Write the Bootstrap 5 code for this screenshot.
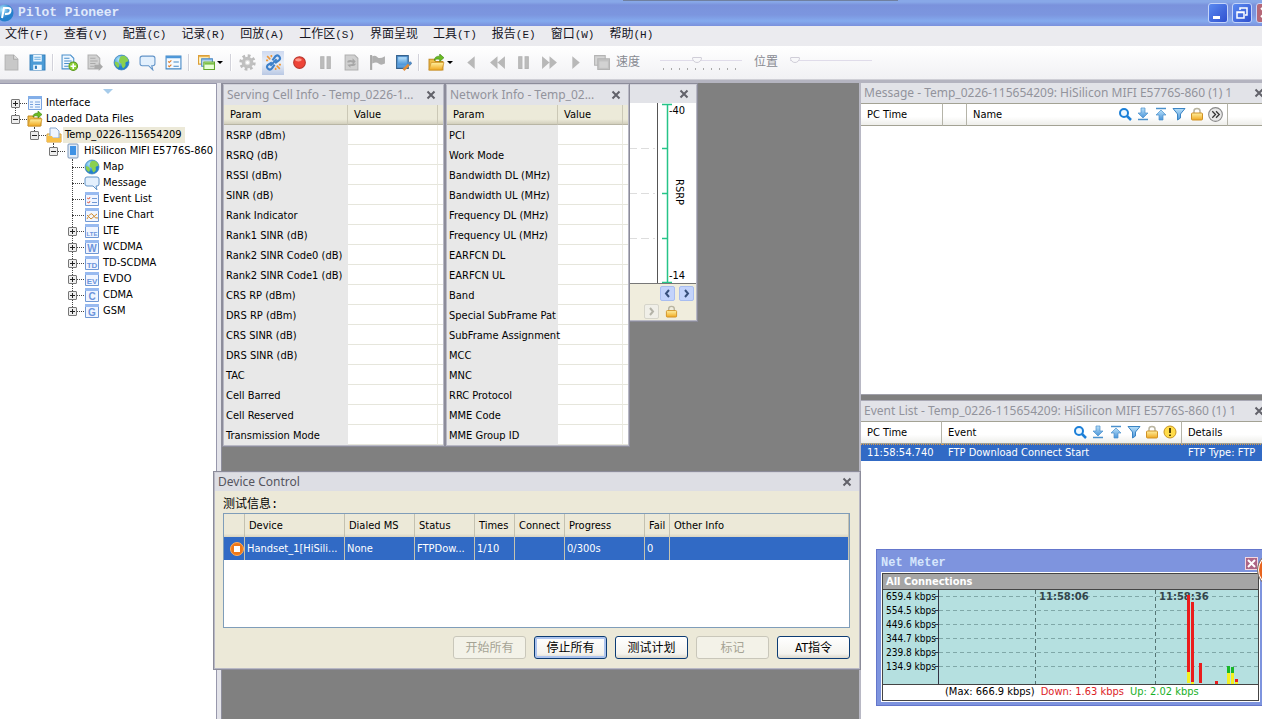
<!DOCTYPE html>
<html lang="zh-CN">
<head>
<meta charset="utf-8">
<meta name="viewport" content="width=device-width, initial-scale=1">
<title>Pilot Pioneer</title>
<link rel="stylesheet" href="https://cdn.jsdelivr.net/npm/bootstrap@5.3.0/dist/css/bootstrap.min.css">
<style>
:root{--ui:"DejaVu Sans Condensed","Noto Sans","Noto Sans CJK SC",sans-serif;--cjk:"Liberation Mono","Noto Sans CJK SC",sans-serif}
body{font:11px/16px var(--ui);color:#000;background:#dcdce3}
svg{display:block;flex:none}
button{font:inherit;color:inherit}
.plain{background:none;border:0;padding:0}
.app-title{height:26px;padding-right:4px;background:linear-gradient(#88a8e8 0,#88a8e8 2px,#7a92dc 5px,#7c96df 15px,#84aaee 21px,#7a90dc 26px);color:#dfe9fb;font:bold 13px/26px "Liberation Mono",monospace}
.backedge{left:50%;margin-left:-8px;width:275px;height:1px;background:#7080a0;top:0}
.winbtn{width:20px;height:20px;border:1px solid #c4d4fa;border-radius:3px;background:linear-gradient(135deg,#5b8af0,#2f50cf);padding:0}
.winbtn.shut{background:#b56878;margin-right:-18px}
.app-title .winset{gap:4px}
.menus{height:20px;background:#ebebef;padding-left:5px;gap:15px;font:12px/18px var(--cjk)}
.menus a{color:#15151f;text-decoration:none;white-space:nowrap}
.menus small{font-size:11px}
.tools{height:34px;background:linear-gradient(#fff,#f1f1f4);border-bottom:1px solid #cfcfd6}
.tb{width:22px;height:24px;display:flex;align-items:center;justify-content:center;flex:none}
.tb.drop{width:32px}
.tb.live{background:linear-gradient(#cfdaf0,#e9eff8 50%,#b9c8e4)}
.tb-sep{width:2px;height:17px;border-left:1px solid #d2d2da;background:#fff;flex:none}
.caret{border:3px solid transparent;border-top-color:#000;border-bottom:0;margin-left:2px}
.tlabel{font:12px/16px var(--cjk);color:#888a92;white-space:nowrap}
.slide{width:82px;height:18px;margin:0;appearance:none;-webkit-appearance:none;background:linear-gradient(#e0dcea,#e0dcea) 0 6px/100% 1px no-repeat}
.slide.ticked{background:linear-gradient(#e0dcea,#e0dcea) 0 6px/100% 1px no-repeat,repeating-linear-gradient(90deg,#aaa 0 1px,transparent 1px 8px) 3px 14px/77px 2px no-repeat}
.slide::-webkit-slider-thumb{-webkit-appearance:none;width:10px;height:6px;border:1px solid #d0ced8;border-radius:1px 1px 5px 5px;background:#f8f8fa;margin-top:-5px}
.work{border-top:3px solid #b4b4c0;background:#dcdce3;min-height:0}
.side{width:217px;background:#fff;border-right:1px solid #9898ac;border-top:1px solid #9898ac;flex:none}
.splitv{width:5px;background:#e3e3e9;border-right:1px solid #8e8e9c;flex:none}
.uparrow{width:0;margin:5px auto 1px;border:5px solid transparent;border-top-color:#a6cbea;border-bottom:0}
.tree,.tree ul{list-style:none;margin:0;padding:0}
.tree{padding-left:11px}
.tree ul{padding-left:19px}
.tree li{position:relative}
.tree li::before{content:"";position:absolute;left:4px;top:-8px;height:16px;border-left:1px dotted #444}
.tree li:first-child::before{top:0;height:8px}
.tree>li:first-child::before{display:none}
.node{height:16px;display:flex;align-items:center;white-space:nowrap}
.node svg{margin-right:3px}
.node .picked{background:#ece9d8;padding:0 3px 0 2px;margin-left:-2px}
.pm{width:9px;height:9px;position:relative;z-index:1;border:1px solid #777;border-radius:1px;background:linear-gradient(#222,#222) 1px 3px/5px 1px no-repeat,#eee;flex:none;padding:0}
.pm.plus{background:linear-gradient(#222,#222) 1px 3px/5px 1px no-repeat,linear-gradient(#222,#222) 3px 1px/1px 5px no-repeat,#eee}
.pm.none{visibility:hidden}
.dots{width:7px;border-top:1px dotted #444;flex:none}
.none+.dots{width:11px;margin-left:-4px}
.desk{background:#808080;min-width:0}
.win{position:absolute;background:#fff;border:2px solid #b8b8c4;border-top-color:#d2d2da;outline:1px solid #8c8c9a;outline-offset:-1px}
.wtitle{height:20px;padding:0 7px 0 3px;background:#e2e3e8;color:#92939c;font:12px/16px "Noto Sans",sans-serif;white-space:nowrap}
.wtitle .cls{color:#62626a;flex:none}
.serving{left:0;top:0;width:223px}
.network{left:223px;top:0;width:185px;z-index:2}
.chartwin{left:300px;top:0;width:176px;z-index:1}
.params{width:100%;table-layout:fixed;border-collapse:separate;border-spacing:0}
.params th{height:20px;font-weight:400;padding:0 0 0 6px;background:linear-gradient(#ecead9,#ecead9 75%,#d2cfbd);border-bottom:1px solid #b8b5a4;border-right:1px solid #cbc8b6}
.params td{height:20px;line-height:17px;padding:2px 0 0 2px;white-space:nowrap;border-bottom:1px solid #e6e6dc;border-right:1px solid #ecebe2}
.params td:first-child{background:#e8e8e8;border-color:#e8e8e8}
.params .stub{width:5px;border-right:0}
.chartfoot{background:#f0eddd;border-top:1px solid #777;height:37px;padding:2px 2px 0;gap:3px}
.chartwin .wtitle{height:18px}
.arrow{width:15px;height:15px;border:1px solid #a8bdf0;border-radius:2px;background:#c3d3fb;padding:0;display:flex;align-items:center;justify-content:center;color:#38507c}
.arrow.off{background:#f0efe8;border-color:#d6d5ca;color:#b4b3a8;margin-right:6px}
.dock{width:403px;flex:none;border-left:2px solid #b8b8c4;background:#fff;overflow:hidden}
.msgpanel{height:312px;border-bottom:1px solid #a0a0aa}
.splith{height:6px;background:#808080;border-bottom:1px solid #a8a8b4}
.dock .wtitle{width:410px}
.log{width:420px;table-layout:fixed;border-collapse:separate;border-spacing:0}
.log th{height:23px;padding:0 0 0 6px;font-weight:400;background:linear-gradient(#fff,#fff 60%,#eeeeea);border-right:1px solid #b5b4a9;border-bottom:1px solid #a3a294;border-top:1px solid #a3a294}
.log td{height:17px;padding:0 0 0 6px;background:#316ac5;color:#fff;white-space:nowrap;border-top:1px dotted #d99a4a}
.log .d-flex{padding-right:2px}
.device{left:213px;top:388px;width:648px;z-index:3;background:#ece9d8}
.device .wtitle{background:#dddee4;color:#555560;height:18px}
.device .body-in{padding:6px 9px 9px 8px}
.device .cap{font:12px/16px var(--cjk)}
.gridbox{height:115px;background:#fff;border:1px solid #7f9db9}
.jobs{width:100%;table-layout:fixed;border-collapse:separate;border-spacing:0}
.jobs th{height:23px;font-weight:400;padding:0 0 0 4px;background:linear-gradient(#ece9d8,#ece9d8 85%,#d8d4c2);border-right:1px solid #c4c1b0;white-space:nowrap}
.jobs td{height:23px;padding:1px 0 0 2px;background:#316ac5;color:#fff;border-right:1px solid #c5c3b0;white-space:nowrap;overflow:hidden;text-overflow:ellipsis}
.xp{width:73px;height:23px;border:1px solid #0c3c74;border-radius:3px;background:linear-gradient(#fff,#f4f3ee 80%,#dcd8cc);font:12px/18px var(--ui);padding:0}
.xp:disabled{border-color:#c9c7ba;background:#f3f2e8;color:#a5a394}
.xp.focus{box-shadow:inset 0 0 0 2px #adc4ee}
.meter{right:0;top:466px;width:386px;z-index:4;background:#7e94de;padding:4px 2px 3px 4px;border:1px solid #6476cc;border-right:0}
.mtitle{height:18px;color:#d6e6fc;font:bold 12px/16px "Liberation Mono",monospace}
.mclose{width:13px;height:13px;border:1px solid #f4d8e0;background:#ad6686;padding:0;margin-right:2px}
.mbox{border:2px solid #fff;outline:1px solid #444;outline-offset:-2px;background:#fff}
.mhead{background:#a5a5a5;color:#fff;font-weight:700;border-bottom:1px solid #444;line-height:15px;padding:0 3px 0}
.mplot{background:#b5e0e0;border-bottom:1px solid #444}
.mscale{width:56px;border-right:1px solid #334;font-size:10px;line-height:14px;padding:0 0 10px 3px;white-space:nowrap;flex:none;background:repeating-linear-gradient(transparent 0 6px,#334 6px 7px,transparent 7px 14px) right 0 top 0/3px 84px no-repeat}
.mfoot{line-height:14px;padding-left:62px;height:15px;white-space:nowrap}
.mfoot .down{color:#dc1e28;margin:0 3px}
.mfoot .up{color:#18b028}
.ball{right:-31px;top:2px;width:36px;height:36px;border-radius:50%;background:#e8641e;border:1px solid #777;box-shadow:inset 0 0 0 1px #fff}
</style>
</head>
<body class="vh-100 d-flex flex-column overflow-hidden">
<svg width="0" height="0" class="position-absolute" aria-hidden="true"><defs>
<linearGradient id="bl" x2="0" y2="1"><stop stop-color="#b8e0fa"/><stop offset="1" stop-color="#4a94d8"/></linearGradient>
<linearGradient id="go" x2="0" y2="1"><stop stop-color="#fff0a0"/><stop offset="1" stop-color="#f0a820"/></linearGradient>
<radialGradient id="gl" cx=".35" cy=".3"><stop stop-color="#b8ecff"/><stop offset="1" stop-color="#2480cc"/></radialGradient>
<symbol id="doc" viewBox="0 0 16 16"><path d="M2 1h8l4 4v10H2z" fill="#c8c8c8" stroke="#b4b4b4"/><path d="M10 1v4h4" fill="#ddd" stroke="#aaa"/></symbol>
<symbol id="save" viewBox="0 0 16 16"><path d="M1 1h14v14H1z" fill="#4b9bd6" stroke="#2f7cba"/><path d="M4 1h8v6H4zM4 10h8v5H4z" fill="#eef8ff"/><path d="M5 3h6M5 5h6" stroke="#6cace0"/><path d="M5.500 11h2v3h-2z" fill="#327dbb"/></symbol>
<symbol id="docadd" viewBox="0 0 16 16"><path d="M1 1h8l3 3v10H1z" fill="#eef7ff" stroke="#4a90cc"/><path d="M3 4h5M3 6.500h7M3 9h5M3 11.500h4" stroke="#4a90cc"/><circle cx="11.500" cy="11.500" r="4" fill="#8ed133" stroke="#55951a"/><path d="M11.500 9v5M9 11.500h5" stroke="#fff" stroke-width="1.500"/></symbol>
<symbol id="docgo" viewBox="0 0 16 16"><path d="M1 1h8l3 3v10H1z" fill="#d2d2d2" stroke="#b0b0b0"/><path d="M3 4h5M3 6.500h7M3 9h5M3 11.500h4" stroke="#aaa"/><path d="M7 10h4V8l4 4-4 4v-2H7z" fill="#aaa"/></symbol>
<symbol id="globe" viewBox="0 0 16 16"><circle cx="8" cy="8" r="7" fill="url(#gl)" stroke="#3a80b8" stroke-width=".7"/><path d="M7 2.500c3-2 7 0 7.500 4-1 1-2 0-3 2 1 2 0 4-2 5C8 12 8 10 8 9 5 8 5 6 7 2.500zM2 7l3 1 1 3-1 2C3 12 1 9 2 7z" fill="#8ad04e"/></symbol>
<symbol id="talk" viewBox="0 0 16 16"><path d="M3 2h10q2 0 2 2v5q0 2-2 2h-1l1 4-4-4H3q-2 0-2-2V4q0-2 2-2z" fill="#e3f0fd" stroke="#6294c8"/></symbol>
<symbol id="list" viewBox="0 0 16 16"><path d="M1 2h14v12H1z" fill="#f4faff" stroke="#4387c4"/><path d="M1 2h14v2H1z" fill="#4c96d8"/><path d="M3 7l1 1 2-2M3 11l1 1 2-2" fill="none" stroke="#e07c28"/><path d="M8 7.500h5M8 11.500h5" stroke="#4387c4"/></symbol>
<symbol id="wins" viewBox="0 0 16 16"><path d="M.5 1.500h10v8H.5z" fill="#fff5c6" stroke="#dc9f38"/><path d="M3.500 4.500h10v7h-10z" fill="#dff0ff" stroke="#4484c4"/><path d="M5.500 7.500h10v7h-10z" fill="#e8ffd8" stroke="#62a82c"/><path d="M1 2h9v1H1z" fill="#e8ae48"/><path d="M4 5h9v1H4z" fill="#5a99d4"/><path d="M6 8h9v2H6z" fill="#7cc048"/></symbol>
<symbol id="gear" viewBox="0 0 16 16"><circle cx="8" cy="8" r="6.200" fill="none" stroke="#bcbcbc" stroke-width="3" stroke-dasharray="2.500 2.370"/><circle cx="8" cy="8" r="4" fill="#ddd" stroke="#c0c0c0" stroke-width="3"/><circle cx="8" cy="8" r="1.500" fill="#fff"/></symbol>
<symbol id="link" viewBox="0 0 16 16"><g fill="none" stroke="#3d80ca" stroke-width="2"><path d="M6.500 8l-4 2.500q-1.500 2 .5 3.500t3.500-.5L9 10M7 6l3-4q2-1.500 3.500.5T13 6L9.500 8.500"/><path d="M5 11l6-6"/></g><path d="M2 2l3 3M6 1v2M1 6h2M11 11l3 3M15 10h-2M10 15v-2" stroke="#f09838" stroke-width="1.500"/></symbol>
<symbol id="rec" viewBox="0 0 16 16"><circle cx="8" cy="8" r="5.500" fill="#ee4438" stroke="#b8372e"/><ellipse cx="7" cy="5.500" rx="3" ry="1.500" fill="#ff9a8c"/></symbol>
<symbol id="pause" viewBox="0 0 16 16"><path d="M3.500 2.500h3v11h-3zM9.500 2.500h3v11h-3z" fill="#bcbcbc" stroke="#b4b4b4"/></symbol>
<symbol id="redo" viewBox="0 0 16 16"><path d="M2 1h9l3 3v11H2z" fill="#d0d0d0" stroke="#b0b0b0"/><path d="M4 8q0-3 5-2V4l3 3-3 3V8q-3-1-3 0zM12 9q0 3-5 2v2l-3-3" fill="#a6a6a6"/></symbol>
<symbol id="flag" viewBox="0 0 16 16"><path d="M2 1v14" stroke="#a8a8a8" stroke-width="2"/><path d="M3 2q3-1 5 1t7-1v7q-4 2-6 0t-6 0z" fill="#b0b0b0"/></symbol>
<symbol id="dev" viewBox="0 0 16 16"><path d="M1.500 1.500h11v12h-11z" fill="#5c9edc" stroke="#35618c"/><path d="M3 3h8v7H3z" fill="url(#bl)"/><path d="M8 15l5-5 2-2" stroke="#e08c38" stroke-width="2.500"/><path d="M11 8l3 3 2-2-1-2z" fill="#508cc8"/></symbol>
<symbol id="open" viewBox="0 0 16 16"><path d="M1 5h5l1 2h7v8H1z" fill="#efbd48" stroke="#c38a20"/><path d="M3 8h12l-2 7H1z" fill="url(#go)" stroke="#d0962a" stroke-width=".7"/><path d="M6 6q0-4 5-4V0l4 3.500L11 7V5Q8 4 6 6z" fill="#6abb22" stroke="#3e8514" stroke-width=".6"/></symbol>
<symbol id="prev" viewBox="0 0 16 16"><path d="M11 2v12L4 8z" fill="#b8b8b8"/></symbol>
<symbol id="next" viewBox="0 0 16 16"><path d="M5 2v12l7-6z" fill="#b8b8b8"/></symbol>
<symbol id="rew" viewBox="0 0 16 16"><path d="M8 2v12L1 8zM15 2v12L8 8z" fill="#b8b8b8"/></symbol>
<symbol id="fwd" viewBox="0 0 16 16"><path d="M1 2v12l7-6zM8 2v12l7-6z" fill="#b8b8b8"/></symbol>
<symbol id="stack" viewBox="0 0 16 16"><path d="M1.500 1.500h10v9h-10z" fill="#d4d4d4" stroke="#b4b4b4"/><path d="M4.500 4.500h11v10h-11z" fill="#c2c2c2" stroke="#b4b4b4"/><path d="M6 7h8v6H6z" fill="#d2d2d2"/></symbol>
<symbol id="x" viewBox="0 0 10 10"><path d="M1.500 1.500l7 7M8.500 1.500l-7 7" stroke="currentColor" stroke-width="2"/></symbol>
<symbol id="lensI" viewBox="0 0 14 14"><circle cx="6" cy="6" r="4" fill="#eef8ff" stroke="#1b7fd8" stroke-width="2"/><path d="M9 9l4 4" stroke="#1b7fd8" stroke-width="2.500"/></symbol>
<symbol id="downI" viewBox="0 0 14 14"><path d="M5 1h4v5h3l-5 5-5-5h3z" fill="url(#bl)" stroke="#4a90cc" stroke-width=".7"/><path d="M2 12.500h10" stroke="#4a90cc" stroke-width="1.500"/></symbol>
<symbol id="upI" viewBox="0 0 14 14"><path d="M5 13h4V8h3L7 3 2 8h3z" fill="url(#bl)" stroke="#4a90cc" stroke-width=".7"/><path d="M2 1.500h10" stroke="#4a90cc" stroke-width="1.500"/></symbol>
<symbol id="funI" viewBox="0 0 14 14"><path d="M1 1.500h12L8.500 7v4L5.500 13V7z" fill="url(#bl)" stroke="#3a84c4"/></symbol>
<symbol id="lockI" viewBox="0 0 14 14"><path d="M4 7V4q0-2.500 3-2.500T10 4v3" fill="none" stroke="#b8b4a0" stroke-width="1.500"/><rect x="1.500" y="6" width="11" height="7" rx="1" fill="url(#go)" stroke="#d09226"/></symbol>
<symbol id="moreI" viewBox="0 0 14 14"><circle cx="7" cy="7" r="6.400" fill="#e8e8e8" stroke="#888"/><path d="M4 4l3 3-3 3M7.500 4l3 3-3 3" fill="none" stroke="#333" stroke-width="1.200"/></symbol>
<symbol id="warnI" viewBox="0 0 14 14"><circle cx="7" cy="7" r="6" fill="#ffdc4a" stroke="#c89420"/><path d="M7 3v5M7 9.500v1.500" stroke="#443300" stroke-width="1.800"/></symbol>
<symbol id="form" viewBox="0 0 16 16"><path d="M1.500 1.500h13v13h-13z" fill="#edf5ff" stroke="#7aa4e0"/><path d="M1 1h14v3H1z" fill="#82aee8"/><path d="M3 7h3M3 9.500h3M3 12h3M8 7h5M8 9.500h5M8 12h5" stroke="#76a0dc"/></symbol>
<symbol id="fold" viewBox="0 0 16 16"><path d="M1 7h14v8H1z" fill="url(#go)" stroke="#d59a32"/><path d="M4 1h6l3 3v7H4z" fill="#f0f6ff" stroke="#88a8d0"/><path d="M1 9h5l1 2h8v4H1z" fill="#f7bf48"/></symbol>
<symbol id="phone" viewBox="0 0 16 16"><rect x="3" y="1" width="10" height="14" rx="1" fill="#e2ecf8" stroke="#7b96b8"/><path d="M5 3h6v9H5z" fill="#3f92e4"/></symbol>
<symbol id="frame" viewBox="0 0 16 16"><path d="M1.500 1.500h13v13h-13z" fill="#f0f5ff" stroke="#7098d4"/><path d="M1 1h14v3H1z" fill="#98baf0"/></symbol>
<symbol id="ev" viewBox="0 0 16 16"><use href="#frame"/><path d="M3 7l2 1 1-2M3 11l2 1 1-2" fill="none" stroke="#e06850"/><path d="M8 7.500h5M8 11.500h5" stroke="#7098d4"/></symbol>
<symbol id="lc" viewBox="0 0 16 16"><use href="#frame"/><path d="M3 12q4-8 6-4t5 3M3 8l4 4 6-5" fill="none" stroke="#d08c30"/></symbol>
</defs></svg>

<header class="app-title d-flex align-items-center position-relative flex-shrink-0">
 <span class="position-absolute backedge"></span>
 <svg width="14" height="18" viewBox="0 0 14 18"><circle cx="5" cy="9" r="8.500" fill="url(#gl)"/><path d="M2 14L4 4h4q3 0 2.500 3T6 10H5" fill="none" stroke="#fff" stroke-width="2"/></svg>
 <span class="ms-1 me-auto">Pilot Pioneer</span>
 <div class="d-flex winset">
  <button class="winbtn" aria-label="Minimize"><svg width="18" height="18"><path d="M4 12h7v3H4z" fill="#fff"/></svg></button>
  <button class="winbtn" aria-label="Restore"><svg width="18" height="18"><path d="M7 6V4h7v7h-2M4 8h7v6H4zM4 8.500h7" fill="none" stroke="#fff" stroke-width="1.500"/></svg></button>
  <button class="winbtn shut" aria-label="Close"><svg width="18" height="18"><path d="M4 4l9 9M13 4l-9 9" stroke="#fff" stroke-width="2"/></svg></button>
 </div>
</header>
<nav class="menus d-flex flex-shrink-0" aria-label="Menu">
 <a href="#">文件<small>(F)</small></a><a href="#">查看<small>(V)</small></a><a href="#">配置<small>(C)</small></a><a href="#">记录<small>(R)</small></a><a href="#">回放<small>(A)</small></a><a href="#">工作区<small>(S)</small></a><a href="#">界面呈现</a><a href="#">工具<small>(T)</small></a><a href="#">报告<small>(E)</small></a><a href="#">窗口<small>(W)</small></a><a href="#">帮助<small>(H)</small></a>
</nav>
<div class="tools d-flex align-items-center gap-1 flex-shrink-0" id="tools">
 <div class="d-flex align-items-center gap-1" id="toolButtons"></div>
 <label class="tlabel" for="speed">速度</label>
 <input id="speed" class="slide ticked ms-3" type="range" min="0" max="9" value="4" disabled>
 <label class="tlabel ms-2" for="pos">位置</label>
 <input id="pos" class="slide ms-2" type="range" value="0" disabled>
</div>

<main class="work flex-grow-1 d-flex position-relative overflow-hidden">
 <aside class="side">
  <div class="uparrow"></div>
  <ul class="tree" id="tree"></ul>
 </aside>
 <div class="splitv"></div>
 <section class="desk flex-grow-1 position-relative">
  <div class="win serving">
   <div class="wtitle d-flex align-items-center justify-content-between gap-2"><span>Serving Cell Info - Temp_0226-1...</span><button class="plain cls" aria-label="Close"><svg width="10" height="10"><use href="#x"/></svg></button></div>
   <table class="params" id="serving"><colgroup><col style="width:124px"><col><col style="width:5px"></colgroup></table>
  </div>
  <div class="win chartwin">
   <div class="wtitle d-flex align-items-center justify-content-end"><button class="plain cls" aria-label="Close"><svg width="10" height="10"><use href="#x"/></svg></button></div>
   <svg width="172" height="180" font-family="DejaVu Sans Condensed" font-size="11">
    <path d="M105 45.500h26M105 90.500h26M105 135.500h26" stroke="#ddd" stroke-dasharray="8 4"/>
    <path d="M133.500 0v180" stroke="#555"/><path d="M138 1.500h10M138 45.500h5M138 90.500h5M138 135.500h5M138 179.500h10M143.500 1v179" stroke="#26c488" stroke-width="1.500"/>
    <text x="145" y="11">-40</text><text x="145" y="176">-14</text><text transform="translate(152 76) rotate(90)">RSRP</text>
   </svg>
   <div class="chartfoot d-flex flex-column align-items-end">
    <div class="d-flex gap-1"><button class="arrow" aria-label="Left"><svg width="9" height="9"><path d="M6 1L3 4.500 6 8" fill="none" stroke="currentColor" stroke-width="2"/></svg></button><button class="arrow" aria-label="Right"><svg width="9" height="9"><path d="M3 1l3 3.500L3 8" fill="none" stroke="currentColor" stroke-width="2"/></svg></button></div>
    <div class="d-flex align-items-center me-3"><button class="arrow off" disabled aria-label="Next"><svg width="9" height="9"><path d="M3 1l3 3.500L3 8" fill="none" stroke="currentColor" stroke-width="2"/></svg></button><svg width="13" height="13"><use href="#lockI"/></svg></div>
   </div>
  </div>
  <div class="win network">
   <div class="wtitle d-flex align-items-center justify-content-between gap-2"><span>Network Info - Temp_02...</span><button class="plain cls" aria-label="Close"><svg width="10" height="10"><use href="#x"/></svg></button></div>
   <table class="params" id="network"><colgroup><col style="width:111px"><col><col style="width:5px"></colgroup></table>
  </div>
 </section>
 <section class="dock">
  <div class="msgpanel">
   <div class="wtitle d-flex align-items-center justify-content-between"><span>Message - Temp_0226-115654209: HiSilicon MIFI E5776S-860 (1) 1</span><button class="plain cls" aria-label="Close"><svg width="10" height="10"><use href="#x"/></svg></button></div>
   <table class="log"><colgroup><col style="width:82px"><col style="width:24px"><col style="width:261px"><col></colgroup>
    <tr><th>PC Time</th><th></th><th><div class="d-flex justify-content-between"><span>Name</span><span class="d-flex gap-1"><svg width="14" height="14"><use href="#lensI"/></svg><svg width="14" height="14"><use href="#downI"/></svg><svg width="14" height="14"><use href="#upI"/></svg><svg width="14" height="14"><use href="#funI"/></svg><svg width="14" height="14"><use href="#lockI"/></svg><svg width="15" height="15"><use href="#moreI"/></svg></span></div></th><th></th></tr></table>
  </div>
  <div class="splith"></div>
  <div>
   <div class="wtitle d-flex align-items-center justify-content-between"><span>Event List - Temp_0226-115654209: HiSilicon MIFI E5776S-860 (1) 1</span><button class="plain cls" aria-label="Close"><svg width="10" height="10"><use href="#x"/></svg></button></div>
   <table class="log"><colgroup><col style="width:81px"><col style="width:240px"><col></colgroup>
    <tr><th>PC Time</th><th><div class="d-flex justify-content-between"><span>Event</span><span class="d-flex gap-1"><svg width="14" height="14"><use href="#lensI"/></svg><svg width="14" height="14"><use href="#downI"/></svg><svg width="14" height="14"><use href="#upI"/></svg><svg width="14" height="14"><use href="#funI"/></svg><svg width="14" height="14"><use href="#lockI"/></svg><svg width="14" height="14"><use href="#warnI"/></svg></span></div></th><th>Details</th></tr>
    <tr><td>11:58:54.740</td><td>FTP Download Connect Start</td><td>FTP Type: FTP</td></tr></table>
  </div>
 </section>

 <section class="win device">
  <div class="wtitle d-flex align-items-center justify-content-between"><span>Device Control</span><button class="plain cls" aria-label="Close"><svg width="10" height="10"><use href="#x"/></svg></button></div>
  <div class="body-in">
   <div class="cap">测试信息:</div>
   <div class="gridbox">
    <table class="jobs"><colgroup><col style="width:21px"><col style="width:100px"><col style="width:70px"><col style="width:60px"><col style="width:40px"><col style="width:50px"><col style="width:80px"><col style="width:25px"><col></colgroup>
     <tr><th></th><th>Device</th><th>Dialed MS</th><th>Status</th><th>Times</th><th>Connect</th><th>Progress</th><th>Fail</th><th>Other Info</th></tr>
     <tr><td><svg class="ms-1" width="14" height="14"><circle cx="7" cy="7" r="6.500" fill="#f07818" stroke="#ffb060"/><path d="M4 4h6v6H4z" fill="#fff"/></svg></td><td>Handset_1[HiSili...</td><td>None</td><td>FTPDow...</td><td>1/10</td><td></td><td>0/300s</td><td>0</td><td></td></tr>
    </table>
   </div>
   <div class="d-flex justify-content-end gap-2 pt-2"><button class="xp" disabled>开始所有</button><button class="xp focus">停止所有</button><button class="xp">测试计划</button><button class="xp" disabled>标记</button><button class="xp">AT指令</button></div>
  </div>
 </section>

 <section class="position-absolute meter">
  <div class="mtitle d-flex justify-content-between align-items-center"><span>Net Meter</span><button class="mclose" aria-label="Close"><svg width="11" height="11"><path d="M2 2l7 7M9 2l-7 7" stroke="#fff" stroke-width="2"/></svg></button></div>
  <div class="mbox">
   <div class="mhead">All Connections</div>
   <div class="mplot d-flex">
    <div class="mscale">659.4 kbps<br>554.5 kbps<br>449.6 kbps<br>344.7 kbps<br>239.8 kbps<br>134.9 kbps</div>
    <svg class="flex-grow-1" height="94" width="318" font-family="DejaVu Sans" font-size="10" font-weight="700">
     <path d="M0 6.500h320M0 20.500h320M0 34.500h320M0 48.500h320M0 62.500h320M0 76.500h320" stroke="#7fa8a8" stroke-dasharray="4 3"/>
     <path d="M96.500 0v94M216.500 0v94" stroke="#557474" stroke-dasharray="4 3"/>
     <g fill="#34464c"><text x="100" y="10">11:58:06</text><text x="220" y="10">11:58:36</text></g>
     <path d="M248 5h3v77h-3zM252 12h3v80h-3zM260 73h3v20h-3zM276 91h3v3h-3zM296 89h3v3h-3z" fill="#ea1c1c"/>
     <path d="M248 82h3v11h-3zM252 92h3v2h-3zM288 83h3v11h-3zM292 83h3v11h-3zM296 92h3v2h-3z" fill="#f4f020"/>
     <path d="M288 76h3v7h-3zM292 77h3v6h-3z" fill="#18b828"/>
    </svg>
   </div>
   <div class="mfoot">(Max: 666.9 kbps)<span class="down"> Down: 1.63 kbps </span><span class="up"> Up: 2.02 kbps</span></div>
  </div>
  <span class="position-absolute ball"></span>
 </section>
</main>
<script src="https://cdn.jsdelivr.net/npm/bootstrap@5.3.0/dist/js/bootstrap.bundle.min.js"></script>
<script>
const use=(id,s=17)=>`<svg width="${s}" height="${s}"><use href="#${id}"/></svg>`;
document.getElementById('toolButtons').innerHTML='doc save | docadd docgo globe talk list | wins+ | gear link* rec pause redo flag dev | open+ prev rew pause fwd next stack'.split(' ').map(n=>{
 if(n==='|')return '<span class="tb-sep"></span>';
 const id=n.replace(/[+*]/,'');
 return `<button class="plain tb ${n.endsWith('+')?'drop':''} ${n.endsWith('*')?'live':''}" aria-label="${id}">${use(id)}${n.endsWith('+')?'<span class="caret"></span>':''}</button>`;
}).join('');
const rows=(id,list)=>document.getElementById(id).insertAdjacentHTML('beforeend','<tr><th>Param</th><th>Value</th><th class="stub"></th></tr>'+list.map(t=>`<tr><td>${t}</td><td></td><td class="stub"></td></tr>`).join(''));
rows('serving',['RSRP (dBm)','RSRQ (dB)','RSSI (dBm)','SINR (dB)','Rank Indicator','Rank1 SINR (dB)','Rank2 SINR Code0 (dB)','Rank2 SINR Code1 (dB)','CRS RP (dBm)','DRS RP (dBm)','CRS SINR (dB)','DRS SINR (dB)','TAC','Cell Barred','Cell Reserved','Transmission Mode']);
rows('network',['PCI','Work Mode','Bandwidth DL (MHz)','Bandwidth UL (MHz)','Frequency DL (MHz)','Frequency UL (MHz)','EARFCN DL','EARFCN UL','Band','Special SubFrame Pat','SubFrame Assignment','MCC','MNC','RRC Protocol','MME Code','MME Group ID']);
const badge=t=>`<svg width="16" height="16" viewBox="0 0 16 16"><use href="#frame"/><text x="8" y="13" text-anchor="middle" font-family="Liberation Sans" font-weight="700" font-size="${t.length>2?6:t.length>1?8:10}" fill="#6c94dc">${t}</text></svg>`;
const node=(pm,icon,label,kids='',cls='')=>`<li><div class="node"><button class="pm ${pm}" aria-label="toggle"></button><span class="dots"></span>${icon}<span class="${cls}">${label}</span></div>${kids?`<ul>${kids}</ul>`:''}</li>`;
const leaf=node('none',use('globe',16),'Map')+node('none',use('talk',16),'Message')+node('none',use('ev',16),'Event List')+node('none',use('lc',16),'Line Chart')
 +[['LTE','LTE'],['W','WCDMA'],['TD','TD-SCDMA'],['EV','EVDO'],['C','CDMA'],['G','GSM']].map(([b,l])=>node('plus',badge(b),l)).join('');
document.getElementById('tree').innerHTML=node('plus',use('form',16),'Interface')+node('',use('open',16),'Loaded Data Files',node('',use('fold',16),'Temp_0226-115654209',node('',use('phone',16),'HiSilicon MIFI E5776S-860',leaf),'picked'));
</script>
</body>
</html>
